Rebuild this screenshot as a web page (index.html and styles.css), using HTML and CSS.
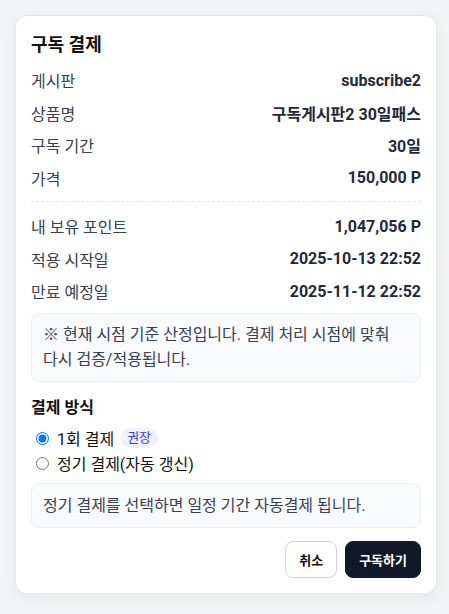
FILE: index.html
```html
<!DOCTYPE html>
<html lang="ko">
<head>
<meta charset="utf-8">
<title>구독 결제</title>
<link rel="stylesheet" href="styles.css">
</head>
<body>
<div class="card">
  <h2 class="title">구독 결제</h2>
  <div class="rows">
    <div class="row"><span class="label">게시판</span><span class="value">subscribe2</span></div>
    <div class="row"><span class="label">상품명</span><span class="value">구독게시판2 30일패스</span></div>
    <div class="row"><span class="label">구독 기간</span><span class="value">30일</span></div>
    <div class="row"><span class="label">가격</span><span class="value">150,000 P</span></div>
  </div>
  <hr class="divider">
  <div class="rows">
    <div class="row"><span class="label">내 보유 포인트</span><span class="value">1,047,056 P</span></div>
    <div class="row"><span class="label">적용 시작일</span><span class="value">2025-10-13 22:52</span></div>
    <div class="row"><span class="label">만료 예정일</span><span class="value">2025-11-12 22:52</span></div>
  </div>
  <div class="note">※ 현재 시점 기준 산정입니다. 결제 처리 시점에 맞춰 다시 검증/적용됩니다.</div>
  <h3 class="subtitle">결제 방식</h3>
  <div class="options">
    <label class="option"><input type="radio" name="pay" checked><span>1회 결제</span><span class="badge">권장</span></label>
    <label class="option"><input type="radio" name="pay"><span>정기 결제(자동 갱신)</span></label>
  </div>
  <div class="note note-single">정기 결제를 선택하면 일정 기간 자동결제 됩니다.</div>
  <div class="actions">
    <button class="btn btn-outline">취소</button>
    <button class="btn btn-primary">구독하기</button>
  </div>
</div>
</body>
</html>
```
FILE: styles.css
```css
* { box-sizing: border-box; }
html, body { margin: 0; }
body {
  background: #f3f4f6;
  padding: 15px 12px 15px 15px;
  font-family: Roboto, "Noto Sans CJK KR", sans-serif;
  color: #111;
  word-break: keep-all;
}
.card {
  width: 422px;
  background: #fff;
  border: 1px solid #e5e7eb;
  border-radius: 12px;
  padding: 15px;
  box-shadow: 0 4px 16px rgba(0,0,0,0.06);
}
.title {
  margin: 0 0 5px;
  font-size: 18px;
  line-height: 28px;
  font-weight: 700;
  color: #111;
}
.rows { display: flex; flex-direction: column; }
.row {
  display: flex;
  justify-content: space-between;
  align-items: center;
  height: 32.5px;
  font-size: 16px;
}
.label { color: #374151; }
.value { color: #1f2937; font-weight: 700; }
.divider {
  border: 0;
  border-top: 1px dashed #e5e7eb;
  margin: 7px 0 8px;
  height: 0;
}
.note {
  margin-top: 5px;
  background: #f9fafb;
  border: 1px solid #eceef1;
  border-radius: 8px;
  padding: 8.5px 11px;
  font-size: 16px;
  line-height: 25px;
  color: #374151;
}
.subtitle {
  margin: 14px 0 6px;
  font-size: 16px;
  line-height: 24px;
  font-weight: 700;
  color: #111;
}
.options { display: flex; flex-direction: column; }
.option {
  display: flex;
  align-items: center;
  height: 25px;
  font-size: 16px;
  color: #111;
  padding-left: 5px;
}
.option input {
  margin: 0 8px 0 0;
  width: 13px;
  height: 13px;
}
.badge {
  margin-left: 6px;
  background: #eef2ff;
  color: #4338ca;
  font-size: 13px;
  line-height: 20px;
  padding: 0 7px;
  border-radius: 10px;
}
.note-single {
  margin-top: 7px;
  padding: 9px 11px;
}
.actions {
  display: flex;
  justify-content: flex-end;
  gap: 8px;
  margin-top: 13px;
}
.btn {
  height: 37px;
  padding: 0 13px;
  border-radius: 8px;
  font-family: inherit;
  font-size: 13px;
  font-weight: 600;
  cursor: pointer;
}
.btn-outline {
  background: #fff;
  border: 1px solid #d1d5db;
  color: #111;
}
.btn-primary {
  background: #111827;
  border: 1px solid #111827;
  color: #fff;
}
```
